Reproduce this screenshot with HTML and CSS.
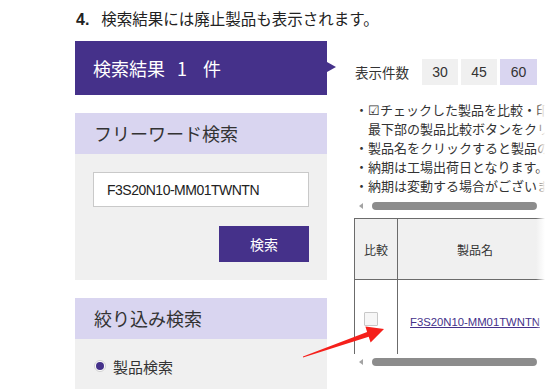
FILE: index.html
```html
<!DOCTYPE html>
<html lang="ja">
<head>
<meta charset="utf-8">
<title>検索結果</title>
<link rel="stylesheet" href="styles.css">
</head>
<body>
<div class="page">
  <h2 class="lead"><span class="num">4.</span>検索結果には廃止製品も表示されます。</h2>
  <div class="main">
    <aside class="side">
      <div class="result-bar">検索結果<span class="count">1</span>件</div>
      <section class="panel">
        <h3 class="panel-head">フリーワード検索</h3>
        <div class="panel-body">
          <input class="kw" type="text" value="F3S20N10-MM01TWNTN">
          <div class="btn-row"><button class="search-btn" type="button">検索</button></div>
        </div>
      </section>
      <section class="panel gap">
        <h3 class="panel-head">絞り込み検索</h3>
        <div class="panel-body filter">
          <label class="radio"><span class="dot"></span>製品検索</label>
        </div>
      </section>
    </aside>
    <div class="content">
      <div class="count-row">
        <span class="tri"></span>
        <span class="label">表示件数</span>
        <div class="pager"><span class="pg">30</span><span class="pg">45</span><span class="pg on">60</span></div>
      </div>
      <ul class="notes">
        <li>・☑チェックした製品を比較・印刷する場合は、<br>最下部の製品比較ボタンをクリックしてください。</li>
        <li>・製品名をクリックすると製品の詳細を表示します。</li>
        <li>・納期は工場出荷日となります。</li>
        <li>・納期は変動する場合がございます。</li>
      </ul>
      <div class="hscroll"><span class="arr"></span><span class="thumb"></span></div>
      <div class="table-wrap">
        <table class="result">
          <thead>
            <tr><th class="c1">比較</th><th class="c2">製品名</th></tr>
          </thead>
          <tbody>
            <tr><td class="c1"><span class="chk"></span></td><td class="c2"><a class="plink" href="#">F3S20N10-MM01TWNTN</a></td></tr>
          </tbody>
        </table>
      </div>
      <div class="hscroll bottom"><span class="arr"></span><span class="thumb"></span></div>
      <div class="fade"></div>
    </div>
  </div>
  <svg class="annot" width="545" height="389" viewBox="0 0 545 389">
    <polygon points="303,356.5 367.1,332 365.4,326.6 384,329 370.6,342.4 368.7,336.8 303,357.5" fill="#f5201b"/>
  </svg>
</div>
</body>
</html>
```
FILE: styles.css
```css
* { box-sizing: border-box; }
html, body { margin: 0; padding: 0; background: #fff; }
body {
  font-family: "Noto Sans CJK JP", "Noto Sans", sans-serif;
  color: #333;
}
.page {
  position: relative;
  width: 545px;
  height: 389px;
  overflow: hidden;
  padding: 6px 0 0 76px;
}
.lead {
  margin: 0 0 11px;
  height: 24px;
  line-height: 24px;
  font-size: 15.5px;
  font-weight: normal;
  color: #222;
  white-space: nowrap;
}
.lead .num {
  font-family: "Liberation Sans", sans-serif;
  font-weight: bold;
  font-size: 16px;
  margin-right: 12px;
}
.main {
  display: flex;
  margin-left: -1px;
}
.side {
  width: 252px;
  flex: none;
}
.result-bar {
  height: 54px;
  line-height: 54px;
  background: #45318a;
  color: #fff;
  font-size: 18px;
  padding-left: 18px;
  white-space: nowrap;
}
.result-bar .count {
  margin: 0 16px 0 12px;
}
.panel { margin-top: 18px; }
.panel-head {
  margin: 0;
  height: 41px;
  line-height: 41px;
  background: #d9d5f0;
  font-size: 18px;
  font-weight: normal;
  padding-left: 19px;
  color: #333;
}
.panel-body {
  background: #f0f0f0;
  padding: 18px 18px;
}
.kw {
  display: block;
  width: 216px;
  height: 35px;
  border: 1px solid #c9c9c9;
  background: #fff;
  padding: 0 0 0 13px;
  font-family: "Liberation Sans", sans-serif;
  font-size: 14px;
  letter-spacing: -0.5px;
  color: #222;
  outline: none;
}
.btn-row {
  display: flex;
  justify-content: flex-end;
  margin-top: 19px;
}
.search-btn {
  width: 90px;
  height: 36px;
  border: none;
  background: #45318a;
  color: #fff;
  font-family: "Noto Sans CJK JP", sans-serif;
  font-size: 14px;
  padding: 0;
}
.filter {
  padding: 15px 0 40px 19px;
}
.radio {
  display: flex;
  align-items: center;
  height: 24px;
  font-size: 15px;
  color: #333;
}
.dot {
  width: 12px;
  height: 12px;
  border-radius: 50%;
  border: 1px solid #d0d0d0;
  background: #fff;
  margin-right: 7px;
  display: flex;
  align-items: center;
  justify-content: center;
}
.dot::after {
  content: "";
  width: 8px;
  height: 8px;
  border-radius: 50%;
  background: #45318a;
}
.content {
  position: relative;
  flex: 1;
  min-width: 0;
  overflow: hidden;
  height: 348px;
}
.count-row {
  display: flex;
  align-items: center;
  height: 26px;
  margin-top: 18px;
}
.tri {
  align-self: flex-start;
  margin-top: 3px;
  width: 0;
  height: 0;
  border-left: 9px solid #45318a;
  border-top: 5px solid transparent;
  border-bottom: 5px solid transparent;
}
.label {
  margin-left: 19px;
  font-size: 13.5px;
  color: #333;
}
.pager {
  display: flex;
  gap: 3px;
  margin-left: 13px;
}
.pg {
  width: 36px;
  height: 26px;
  line-height: 26px;
  text-align: center;
  background: #f0f0f0;
  font-family: "Liberation Sans", sans-serif;
  font-size: 14px;
  color: #333;
}
.pg.on { background: #d9d5f0; width: 37px; }
.notes {
  list-style: none;
  margin: 15px 0 0 28px;
  padding: 0 0 0 13px;
  font-size: 13px;
  line-height: 19px;
  white-space: nowrap;
  color: #333;
}
.notes li { text-indent: -13px; }
.hscroll {
  display: flex;
  align-items: center;
  height: 12px;
  margin: 5px 0 0 27px;
}
.hscroll.bottom { margin-top: 2px; }
.arr {
  width: 0;
  height: 0;
  margin-left: 5px;
  border-right: 4px solid #a3a3a3;
  border-top: 3.5px solid transparent;
  border-bottom: 3.5px solid transparent;
}
.thumb {
  margin-left: 9px;
  width: 165px;
  height: 8px;
  border-radius: 4px;
  background: #8c8c8c;
}
.table-wrap {
  margin: 6px 0 0 27px;
  height: 136px;
  overflow: hidden;
}
.result {
  border-collapse: collapse;
  width: 199px;
  table-layout: fixed;
}
.result th, .result td {
  border: 1px solid #6b6b6b;
  padding: 0;
}
.result th {
  height: 61px;
  background: #f0f0f0;
  font-size: 12px;
  font-weight: normal;
  color: #333;
  text-align: center;
}
.result .c1 { width: 43px; }
.result td { height: 78px; vertical-align: middle; }
.result td.c1 { padding-left: 9px; }
.result td.c2 { text-align: center; }
.chk {
  display: block;
  width: 14px;
  height: 14px;
  border: 1px solid #c8c8c8;
  background: #f6f6f6;
  border-radius: 1px;
}
.plink {
  font-family: "Liberation Sans", sans-serif;
  font-size: 11.3px;
  color: #45318a;
  text-decoration: underline;
}
.fade {
  position: absolute;
  right: 0;
  top: 52px;
  bottom: 0;
  width: 9px;
  background: linear-gradient(to right, rgba(255,255,255,0), #fff);
}
.annot {
  position: absolute;
  left: 0;
  top: 0;
  pointer-events: none;
}
```
